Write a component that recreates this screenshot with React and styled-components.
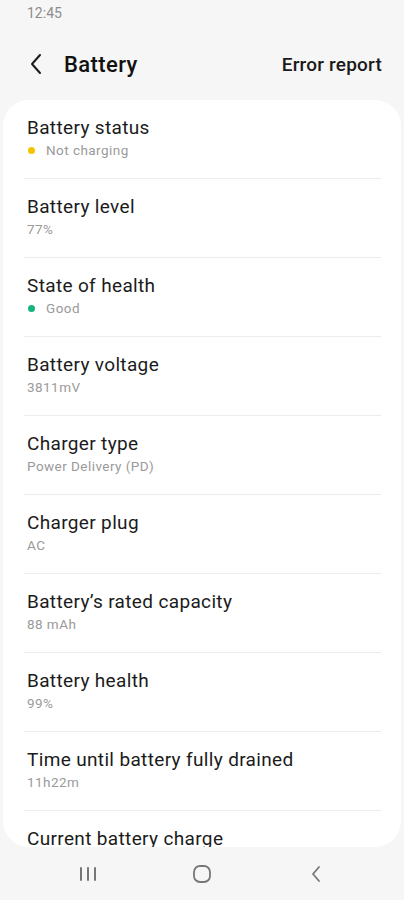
import styled, { createGlobalStyle } from "styled-components";

const GlobalStyle = createGlobalStyle`
  html, body {
    margin: 0;
    padding: 0;
    background: #f6f6f6;
    font-family: Roboto, "Noto Sans", sans-serif;
  }
`;

const Screen = styled.div`
  width: 404px;
  height: 900px;
  display: flex;
  flex-direction: column;
  background: #f6f6f6;
  overflow: hidden;
`;

const StatusBar = styled.div`
  height: 28px;
  padding: 5px 0 0 27px;
  box-sizing: border-box;
  font-size: 14px;
  color: #8d8d8d;
`;

const Header = styled.header`
  height: 72px;
  display: flex;
  align-items: center;
  padding: 0 22px 0 24px;
  box-sizing: border-box;
`;

const BackButton = styled.button`
  border: 0;
  background: none;
  padding: 0;
  width: 24px;
  height: 24px;
  display: flex;
  align-items: center;
  justify-content: center;
  margin-right: 16px;
`;

const Title = styled.h1`
  margin: 0;
  flex: 1;
  font-size: 22px;
  font-weight: 500;
  color: #111;
  letter-spacing: 0.4px;
`;

const Action = styled.span`
  font-size: 19px;
  font-weight: 500;
  color: #1a1a1a;
  letter-spacing: 0.2px;
`;

const Card = styled.div`
  flex: 1;
  margin: 0 3px;
  background: #fff;
  border-radius: 26px;
  overflow: hidden;
`;

const Row = styled.div`
  margin: 0 20px 0 21px;
  padding: 17px 3px;
  border-bottom: 1px solid ${({ last }) => (last ? "transparent" : "#ececec")};
`;

const Label = styled.div`
  font-size: 19px;
  line-height: 22px;
  letter-spacing: 0.35px;
  color: #1b1b1b;
`;

const Sub = styled.div`
  display: flex;
  align-items: center;
  gap: 11px;
  margin-top: 1px;
  font-size: 13.5px;
  line-height: 21px;
  letter-spacing: 0.45px;
  color: #9a9a9a;
`;

const Dot = styled.span`
  width: 7px;
  height: 7px;
  border-radius: 50%;
  margin-left: 1px;
  background: ${({ color }) => color};
`;

const NavBar = styled.nav`
  height: 53px;
  display: flex;
  align-items: center;
  justify-content: space-between;
  padding: 0 58px;
`;

const NavIcon = styled.div`
  width: 60px;
  display: flex;
  justify-content: center;
`;

const rows = [
  { label: "Battery status", value: "Not charging", dot: "#f5c400" },
  { label: "Battery level", value: "77%" },
  { label: "State of health", value: "Good", dot: "#14b57e" },
  { label: "Battery voltage", value: "3811mV" },
  { label: "Charger type", value: "Power Delivery (PD)" },
  { label: "Charger plug", value: "AC" },
  { label: "Battery’s rated capacity", value: "88 mAh" },
  { label: "Battery health", value: "99%" },
  { label: "Time until battery fully drained", value: "11h22m" },
  { label: "Current battery charge", value: "-" },
];

export default function App() {
  return (
    <Screen>
      <GlobalStyle />
      <StatusBar>12:45</StatusBar>
      <Header>
        <BackButton>
          <svg width="14" height="22" viewBox="0 0 14 22" fill="none">
            <path d="M11 2 L3 11 L11 20" stroke="#1a1a1a" strokeWidth="2" strokeLinecap="round" strokeLinejoin="round" />
          </svg>
        </BackButton>
        <Title>Battery</Title>
        <Action>Error report</Action>
      </Header>
      <Card>
        {rows.map((r, i) => (
          <Row key={r.label} last={i === rows.length - 1}>
            <Label>{r.label}</Label>
            <Sub>
              {r.dot && <Dot color={r.dot} />}
              {r.value}
            </Sub>
          </Row>
        ))}
      </Card>
      <NavBar>
        <NavIcon>
          <svg width="20" height="18" viewBox="0 0 20 18">
            <g stroke="#777" strokeWidth="2" strokeLinecap="round">
              <path d="M3 3 V15" />
              <path d="M10 3 V15" />
              <path d="M17 3 V15" />
            </g>
          </svg>
        </NavIcon>
        <NavIcon>
          <svg width="20" height="20" viewBox="0 0 20 20">
            <rect x="2" y="2" width="16" height="16" rx="6" fill="none" stroke="#777" strokeWidth="1.8" />
          </svg>
        </NavIcon>
        <NavIcon>
          <svg width="14" height="20" viewBox="0 0 14 20">
            <path d="M10 3 L4 10 L10 17" fill="none" stroke="#777" strokeWidth="1.8" strokeLinecap="round" strokeLinejoin="round" />
          </svg>
        </NavIcon>
      </NavBar>
    </Screen>
  );
}
